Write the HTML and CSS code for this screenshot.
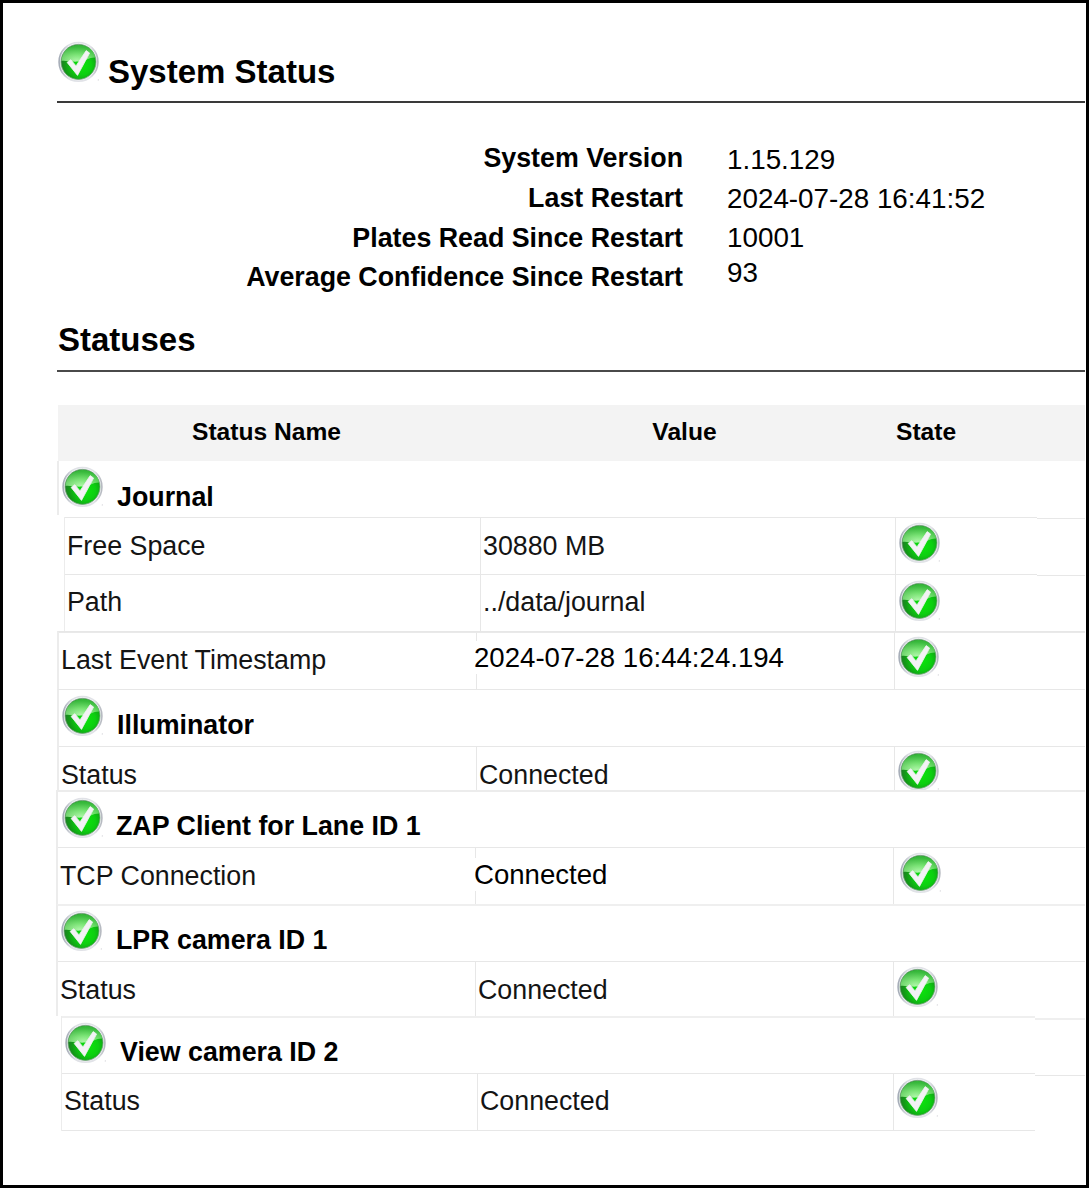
FILE: index.html
```html
<!DOCTYPE html>
<html lang="en">
<head>
<meta charset="utf-8">
<title>System Status</title>
<link rel="stylesheet" href="styles.css">
</head>
<body>
<svg class="defs" width="0" height="0" aria-hidden="true">
  <defs>
    <linearGradient id="ring" x1="0" y1="0" x2="1" y2="0">
      <stop offset="0" stop-color="#a4abb6"/><stop offset=".25" stop-color="#dfe1e6"/><stop offset=".8" stop-color="#e2e3e8"/><stop offset="1" stop-color="#b4b8bf"/>
    </linearGradient>
    <radialGradient id="ball" cx=".6" cy=".6" r=".6">
      <stop offset="0" stop-color="#0be40b"/><stop offset=".45" stop-color="#0ccf10"/><stop offset=".8" stop-color="#129a16"/><stop offset="1" stop-color="#1f7f26"/>
    </radialGradient>
    <radialGradient id="gloss" cx=".45" cy=".95" r=".85">
      <stop offset="0" stop-color="#ccfbc4"/><stop offset=".45" stop-color="#8be985"/><stop offset="1" stop-color="#3cc040"/>
    </radialGradient>
    <symbol id="ok" viewBox="0.2 -0.4 42 42">
      <circle cx="20.7" cy="20.5" r="19.4" fill="#f1f2f5" stroke="url(#ring)" stroke-width="1.6"/>
      <circle cx="20.7" cy="20.5" r="17.5" fill="url(#ball)" stroke="#6f9f76" stroke-width=".8"/>
      <path d="M3.8 19.500C4.200 10 11.300 3.600 20.700 3.600S36.800 9.500 37.200 16C31 16 27 19.800 20 20.200C13 20.600 8 19 3.800 19.500Z" fill="url(#gloss)" opacity=".85"/>
      <path d="M9.300 21L13 18.300L18.200 24.500L28.400 9.200L31.800 11.700L19.700 34Z" fill="#f3f2f5" stroke="#eef3ef" stroke-width=".8" stroke-linejoin="round"/>
      <circle cx="40.500" cy="38.500" r=".6" fill="#cfcfd4"/>
    </symbol>
  </defs>
</svg>
<main class="frame">
  <header class="title">
    <svg class="icon"><use href="#ok"/></svg>
    <h1>System Status</h1>
  </header>
  <section class="summary">
    <div class="labels"><b>System Version</b><b>Last Restart</b><b>Plates Read Since Restart</b><b>Average Confidence Since Restart</b></div>
    <div class="values"><span>1.15.129</span><span>2024-07-28 16:41:52</span><span>10001</span><span>93</span></div>
  </section>
  <h2>Statuses</h2>
  <section class="table">
    <div class="head"><b class="h-name">Status Name</b><b class="h-value">Value</b><b class="h-state">State</b></div>

    <div class="group journal"><svg class="icon"><use href="#ok"/></svg><b>Journal</b></div>
    <div class="row inset free">
      <div class="name">Free Space</div><div class="value">30880 MB</div><div class="state"><svg class="icon"><use href="#ok"/></svg></div><div class="tail"></div>
    </div>
    <div class="row inset path">
      <div class="name">Path</div><div class="value">../data/journal</div><div class="state"><svg class="icon"><use href="#ok"/></svg></div><div class="tail"></div>
    </div>
    <div class="row event">
      <div class="name">Last Event Timestamp</div><div class="value"><span class="patch">2024-07-28 16:44:24.194</span></div><div class="state"><svg class="icon"><use href="#ok"/></svg></div>
    </div>

    <div class="group illum"><svg class="icon"><use href="#ok"/></svg><b>Illuminator</b></div>
    <div class="row illum-status">
      <div class="name">Status</div><div class="value">Connected</div><div class="state"><svg class="icon"><use href="#ok"/></svg></div>
    </div>

    <div class="group zap"><svg class="icon"><use href="#ok"/></svg><b>ZAP Client for Lane ID 1</b></div>
    <div class="row tcp">
      <div class="name">TCP Connection</div><div class="value"><span class="patch">Connected</span></div><div class="state"><svg class="icon"><use href="#ok"/></svg></div>
    </div>

    <div class="group lpr"><svg class="icon"><use href="#ok"/></svg><b>LPR camera ID 1</b></div>
    <div class="row lpr-status">
      <div class="name">Status</div><div class="value">Connected</div><div class="state"><svg class="icon"><use href="#ok"/></svg></div>
    </div>

    <div class="group view"><div class="view-main"><svg class="icon"><use href="#ok"/></svg><b>View camera ID 2</b></div><div class="tail"></div></div>
    <div class="row view-status">
      <div class="name">Status</div><div class="value">Connected</div><div class="state"><svg class="icon"><use href="#ok"/></svg></div><div class="tail"></div>
    </div>
  </section>
</main>
</body>
</html>
```
FILE: styles.css
```css
* { box-sizing: border-box; }
body { margin: 0; background: #fff; color: #000; font-family: "Liberation Sans", Arial, sans-serif; }
.defs { display: block; height: 0; }
.frame { width: 1089px; height: 1188px; border: 3px solid #000; padding: 38px 1px 0 54px; overflow: hidden; }
.icon { display: block; flex: none; width: 42px; height: 42px; }

.title { display: flex; height: 62px; border-bottom: 2px solid #3a3a3a; padding-left: 1px; }
h1, h2 { margin: 0; font-size: 33px; line-height: 38px; font-weight: bold; white-space: nowrap; }
h1 { padding: 12px 0 0 8px; }
h2 { height: 51px; padding-left: 1px; border-bottom: 2px solid #4a4a4a; }

.summary { display: flex; height: 218px; padding-top: 41px; }
.labels { display: flex; flex-direction: column; width: 626px; text-align: right; font-size: 26.8px; line-height: 39.8px; margin-top: -5px; }
.values { display: flex; flex-direction: column; margin-left: 44px; font-size: 27.8px; line-height: 39px; margin-top: -4px; }
.values span:last-child { line-height: 32px; }

.table { margin-top: 33px; font-size: 26.8px; line-height: 30px; white-space: nowrap; color: #141414; }
.head { display: flex; height: 56px; margin-left: 1px; background: #f3f3f3; font-size: 24.6px; padding-top: 12px; color: #000; }
.h-name { width: 417px; text-align: center; }
.h-value { width: 419px; text-align: center; }
.h-state { padding-left: 2px; }

.group { display: flex; border-left: 2px solid #ececec; color: #000; }
.row { display: grid; grid-template-columns: 417px 418px 1fr; border-left: 2px solid #ececec; overflow: hidden; }
.row > div { border-top: 1px solid #e7e7e7; }
.value, .state { border-left: 1px solid #e7e7e7; }

.journal { height: 54px; margin-bottom: 2px; padding: 5px 0 0 3px; }
.journal b { padding: 16px 0 0 13px; }

.inset { margin-left: 7px; grid-template-columns: 415px 415px 142px 1fr; border-left-width: 1px; }
.inset .tail { margin-top: 1px; }
.inset .name { padding: 13px 0 0 2px; }
.inset .value { padding: 13px 0 0 2px; }
.inset .state { padding: 4px 0 0 3px; }
.free { height: 57px; }
.path { height: 57px; }
.path .name, .path .value { padding-top: 12px; }
.path .state { padding-top: 5px; }

.event { height: 58px; border-top: 1px solid #e7e7e7; }
.event > div { border-top-color: #e9e9e9; }
.event .name { padding: 12px 0 0 2px; }
.event .state { padding: 3px 0 0 3px; }
.patch { display: block; width: max-content; margin-left: -3px; padding: 1px 0; background: #fff; color: #000; font-size: 27.6px; line-height: 31px; }
.event .value { padding: 8px 0 0; }

.illum { height: 57px; border-top: 1px solid #e7e7e7; padding: 5px 0 0 3px; }
.illum b { padding: 15px 0 0 13px; }
.illum-status { height: 44px; }
.illum-status .name { padding: 13px 0 0 2px; }
.illum-status .value { padding: 13px 0 0 2px; }
.illum-status .state { padding: 3px 0 0 3px; }

.zap { height: 57px; margin-left: -1px; border-top: 2px solid #ececec; padding: 5px 0 0 4px; }
.zap b { padding: 14px 0 0 12px; }
.tcp { height: 57px; margin-left: -1px; }
.tcp .name { padding: 13px 0 0 2px; }
.tcp .value { padding-top: 10px; }
.tcp .patch { margin-left: -2px; }
.tcp .state { padding: 4px 0 0 6px; }

.lpr { height: 57px; margin-left: -1px; border-top: 2px solid #efefef; padding: 4px 0 0 3px; }
.lpr b { padding: 15px 0 0 13px; }
.lpr-status { height: 55px; margin-left: -1px; }
.lpr-status .name { padding: 13px 0 0 2px; }
.lpr-status .value { padding: 13px 0 0 2px; }
.lpr-status .state { padding: 4px 0 0 3px; }

.view { height: 57px; margin-left: 4px; border-left-width: 1px; }
.view-main { display: flex; width: 973px; border-top: 2px solid #efefef; padding: 4px 0 0 3px; }
.view-main b { padding: 15px 0 0 13px; }
.view .tail { flex: 1; margin-top: 2px; border-top: 2px solid #efefef; }
.view-status { height: 58px; margin-left: 4px; border-left-width: 1px; grid-template-columns: 415px 416px 142px 1fr; }
.view-status > div { border-bottom: 1px solid #e7e7e7; }
.view-status > .tail { margin-top: 2px; border-bottom: 0; }
.view-status .name { padding: 12px 0 0 2px; }
.view-status .value { padding: 12px 0 0 2px; }
.view-status .state { padding: 3px 0 0 3px; }
```
